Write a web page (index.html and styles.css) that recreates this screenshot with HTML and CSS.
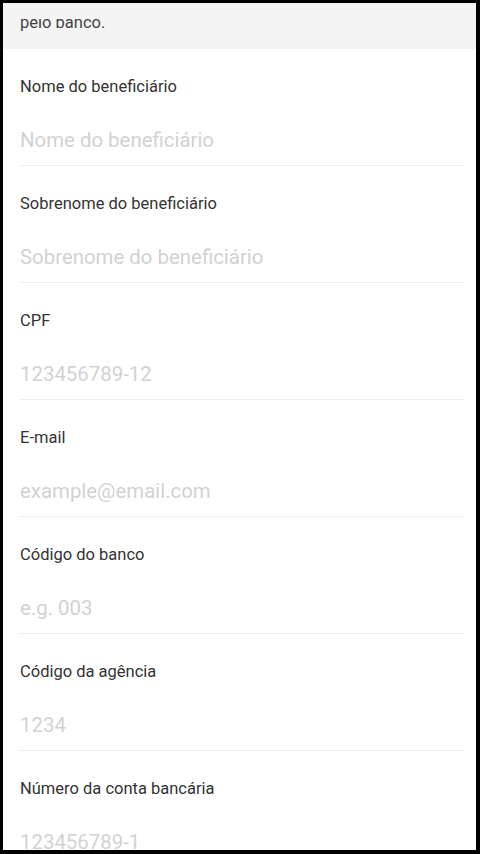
FILE: index.html
```html
<!DOCTYPE html>
<html>
<head>
    <title>Dados do beneficiário</title>
    <link rel="stylesheet" href="styles.css">
</head>
<body>
    <div class="screen">
        <div class="intro">
            <div class="intro-clip">
                <p>Os dados abaixo devem ser iguais aos registrados<br>pelo banco.</p>
            </div>
        </div>

        <form class="form">
            <div class="field">
                <label for="nome">Nome do beneficiário</label>
                <input type="text" id="nome" placeholder="Nome do beneficiário">
            </div>
            <div class="field">
                <label for="sobrenome">Sobrenome do beneficiário</label>
                <input type="text" id="sobrenome" placeholder="Sobrenome do beneficiário">
            </div>
            <div class="field">
                <label for="cpf">CPF</label>
                <input type="text" id="cpf" placeholder="123456789-12">
            </div>
            <div class="field">
                <label for="email">E-mail</label>
                <input type="text" id="email" placeholder="example@email.com">
            </div>
            <div class="field">
                <label for="banco">Código do banco</label>
                <input type="text" id="banco" placeholder="e.g. 003">
            </div>
            <div class="field">
                <label for="agencia">Código da agência</label>
                <input type="text" id="agencia" placeholder="1234">
            </div>
            <div class="field">
                <label for="conta">Número da conta bancária</label>
                <input type="text" id="conta" placeholder="123456789-1">
            </div>
        </form>
    </div>
</body>
</html>
```

FILE: styles.css
```css
html, body {
    margin: 0;
    padding: 0;
    background-color: #000000;
}

body {
    font-family: Roboto, "Noto Sans", Arial, sans-serif;
    color: #333333;
}

.screen {
    margin: 3px 4px 4px 3px;
    height: 847px;
    background-color: #ffffff;
    overflow: hidden;
}

.intro {
    background-color: #f4f4f4;
    padding: 16px 20px 14px 17px;
}

.intro-clip {
    height: 16px;
    overflow: hidden;
    display: flex;
    flex-direction: column;
    justify-content: flex-end;
}

.intro p {
    margin: 0;
    font-size: 16.5px;
    line-height: 24px;
    color: #444444;
    white-space: nowrap;
}

.form {
    margin: 0;
}

.field {
    margin: 0 11px 0 17px;
    padding: 28px 0 13px;
    border-bottom: 1px solid #eeeeee;
}

.field label {
    display: block;
    font-size: 16.5px;
    line-height: 20px;
    color: #333333;
}

.field input {
    display: block;
    width: 100%;
    margin-top: 31px;
    height: 24px;
    padding: 0;
    border: none;
    outline: none;
    background: transparent;
    font-family: inherit;
    font-size: 20.4px;
    color: #333333;
}

.field input::placeholder {
    color: #d2d2d2;
}
```
